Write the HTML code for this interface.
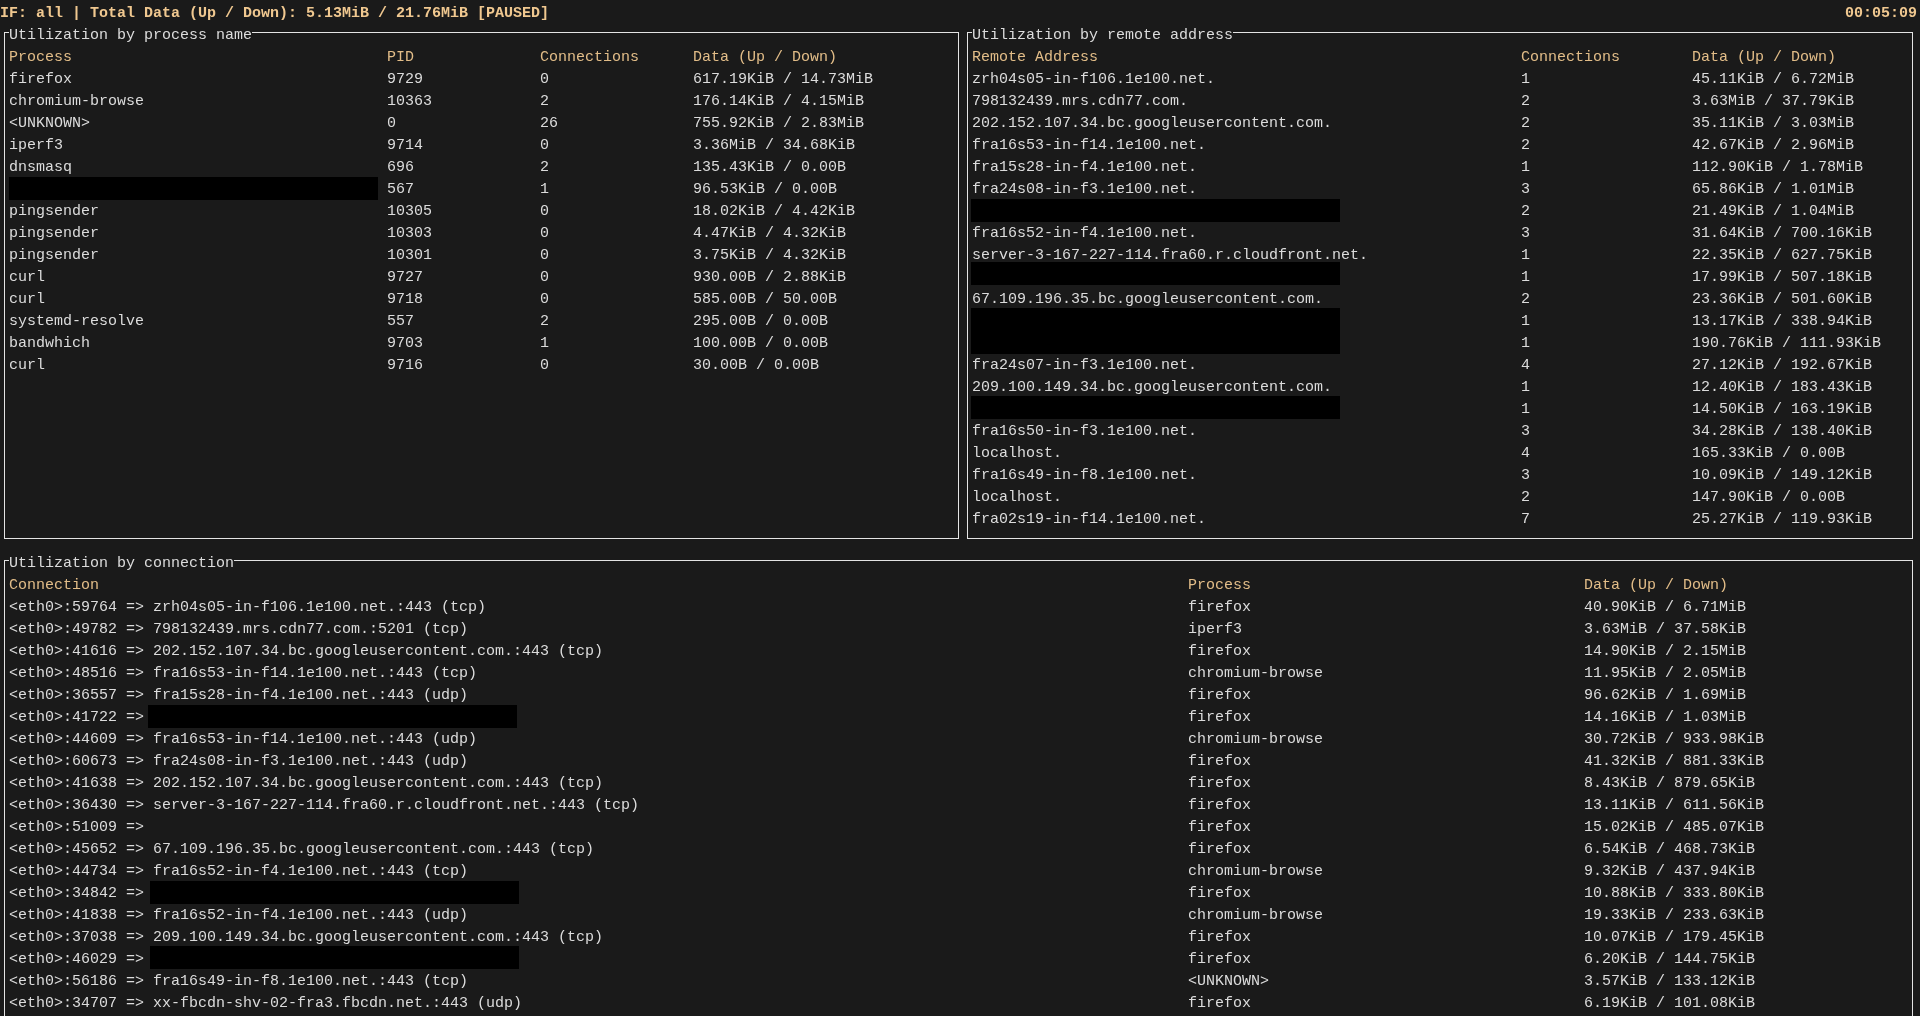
<!DOCTYPE html><html><head><meta charset="utf-8"><style>
html,body{margin:0;padding:0;width:1920px;height:1016px;overflow:hidden;background:#1a1a1a;}
body{position:relative;font-family:"Liberation Mono",monospace;font-size:15px;line-height:22px;color:#dcdcdc;}
.t,.h,.b{position:absolute;white-space:pre;height:22px;}
.h{color:#e2bd88;}
.b{color:#f0c890;font-weight:bold;}
.l{position:absolute;background:#e4e4e4;}
.k{position:absolute;background:#000;}

</style></head><body><div id="w" style="position:absolute;left:0;top:0;width:1920px;height:1016px;will-change:transform">
<div class="l" style="left:4px;top:32px;width:5px;height:1px"></div>
<div class="l" style="left:252px;top:32px;width:707px;height:1px"></div>
<div class="l" style="left:4px;top:32px;width:1px;height:507px"></div>
<div class="l" style="left:958px;top:32px;width:1px;height:507px"></div>
<div class="l" style="left:4px;top:538px;width:955px;height:1px"></div>
<div class="l" style="left:967px;top:32px;width:5px;height:1px"></div>
<div class="l" style="left:1233px;top:32px;width:680px;height:1px"></div>
<div class="l" style="left:967px;top:32px;width:1px;height:507px"></div>
<div class="l" style="left:1912px;top:32px;width:1px;height:507px"></div>
<div class="l" style="left:967px;top:538px;width:946px;height:1px"></div>
<div class="l" style="left:4px;top:560px;width:5px;height:1px"></div>
<div class="l" style="left:234px;top:560px;width:1679px;height:1px"></div>
<div class="l" style="left:4px;top:560px;width:1px;height:485px"></div>
<div class="l" style="left:1912px;top:560px;width:1px;height:485px"></div>
<div class="l" style="left:4px;top:1044px;width:1909px;height:1px"></div>
<div class="k" style="left:9px;top:177px;width:369px;height:23px"></div>
<div class="k" style="left:971px;top:199px;width:369px;height:23px"></div>
<div class="k" style="left:971px;top:262px;width:369px;height:23px"></div>
<div class="k" style="left:971px;top:308px;width:369px;height:46px"></div>
<div class="k" style="left:971px;top:396px;width:369px;height:23px"></div>
<div class="k" style="left:148px;top:705px;width:369px;height:23px"></div>
<div class="k" style="left:150px;top:881px;width:369px;height:23px"></div>
<div class="k" style="left:150px;top:946px;width:369px;height:23px"></div>
<div class="b" style="left:0px;top:3px">IF: all | Total Data (Up / Down): 5.13MiB / 21.76MiB [PAUSED]</div>
<div class="b" style="left:1845px;top:3px">00:05:09</div>
<div class="t" style="left:9px;top:25px">Utilization by process name</div>
<div class="t" style="left:972px;top:25px">Utilization by remote address</div>
<div class="h" style="left:9px;top:47px">Process</div>
<div class="h" style="left:387px;top:47px">PID</div>
<div class="h" style="left:540px;top:47px">Connections</div>
<div class="h" style="left:693px;top:47px">Data (Up / Down)</div>
<div class="h" style="left:972px;top:47px">Remote Address</div>
<div class="h" style="left:1521px;top:47px">Connections</div>
<div class="h" style="left:1692px;top:47px">Data (Up / Down)</div>
<div class="t" style="left:9px;top:69px">firefox</div>
<div class="t" style="left:387px;top:69px">9729</div>
<div class="t" style="left:540px;top:69px">0</div>
<div class="t" style="left:693px;top:69px">617.19KiB / 14.73MiB</div>
<div class="t" style="left:9px;top:91px">chromium-browse</div>
<div class="t" style="left:387px;top:91px">10363</div>
<div class="t" style="left:540px;top:91px">2</div>
<div class="t" style="left:693px;top:91px">176.14KiB / 4.15MiB</div>
<div class="t" style="left:9px;top:113px">&lt;UNKNOWN&gt;</div>
<div class="t" style="left:387px;top:113px">0</div>
<div class="t" style="left:540px;top:113px">26</div>
<div class="t" style="left:693px;top:113px">755.92KiB / 2.83MiB</div>
<div class="t" style="left:9px;top:135px">iperf3</div>
<div class="t" style="left:387px;top:135px">9714</div>
<div class="t" style="left:540px;top:135px">0</div>
<div class="t" style="left:693px;top:135px">3.36MiB / 34.68KiB</div>
<div class="t" style="left:9px;top:157px">dnsmasq</div>
<div class="t" style="left:387px;top:157px">696</div>
<div class="t" style="left:540px;top:157px">2</div>
<div class="t" style="left:693px;top:157px">135.43KiB / 0.00B</div>
<div class="t" style="left:387px;top:179px">567</div>
<div class="t" style="left:540px;top:179px">1</div>
<div class="t" style="left:693px;top:179px">96.53KiB / 0.00B</div>
<div class="t" style="left:9px;top:201px">pingsender</div>
<div class="t" style="left:387px;top:201px">10305</div>
<div class="t" style="left:540px;top:201px">0</div>
<div class="t" style="left:693px;top:201px">18.02KiB / 4.42KiB</div>
<div class="t" style="left:9px;top:223px">pingsender</div>
<div class="t" style="left:387px;top:223px">10303</div>
<div class="t" style="left:540px;top:223px">0</div>
<div class="t" style="left:693px;top:223px">4.47KiB / 4.32KiB</div>
<div class="t" style="left:9px;top:245px">pingsender</div>
<div class="t" style="left:387px;top:245px">10301</div>
<div class="t" style="left:540px;top:245px">0</div>
<div class="t" style="left:693px;top:245px">3.75KiB / 4.32KiB</div>
<div class="t" style="left:9px;top:267px">curl</div>
<div class="t" style="left:387px;top:267px">9727</div>
<div class="t" style="left:540px;top:267px">0</div>
<div class="t" style="left:693px;top:267px">930.00B / 2.88KiB</div>
<div class="t" style="left:9px;top:289px">curl</div>
<div class="t" style="left:387px;top:289px">9718</div>
<div class="t" style="left:540px;top:289px">0</div>
<div class="t" style="left:693px;top:289px">585.00B / 50.00B</div>
<div class="t" style="left:9px;top:311px">systemd-resolve</div>
<div class="t" style="left:387px;top:311px">557</div>
<div class="t" style="left:540px;top:311px">2</div>
<div class="t" style="left:693px;top:311px">295.00B / 0.00B</div>
<div class="t" style="left:9px;top:333px">bandwhich</div>
<div class="t" style="left:387px;top:333px">9703</div>
<div class="t" style="left:540px;top:333px">1</div>
<div class="t" style="left:693px;top:333px">100.00B / 0.00B</div>
<div class="t" style="left:9px;top:355px">curl</div>
<div class="t" style="left:387px;top:355px">9716</div>
<div class="t" style="left:540px;top:355px">0</div>
<div class="t" style="left:693px;top:355px">30.00B / 0.00B</div>
<div class="t" style="left:972px;top:69px">zrh04s05-in-f106.1e100.net.</div>
<div class="t" style="left:1521px;top:69px">1</div>
<div class="t" style="left:1692px;top:69px">45.11KiB / 6.72MiB</div>
<div class="t" style="left:972px;top:91px">798132439.mrs.cdn77.com.</div>
<div class="t" style="left:1521px;top:91px">2</div>
<div class="t" style="left:1692px;top:91px">3.63MiB / 37.79KiB</div>
<div class="t" style="left:972px;top:113px">202.152.107.34.bc.googleusercontent.com.</div>
<div class="t" style="left:1521px;top:113px">2</div>
<div class="t" style="left:1692px;top:113px">35.11KiB / 3.03MiB</div>
<div class="t" style="left:972px;top:135px">fra16s53-in-f14.1e100.net.</div>
<div class="t" style="left:1521px;top:135px">2</div>
<div class="t" style="left:1692px;top:135px">42.67KiB / 2.96MiB</div>
<div class="t" style="left:972px;top:157px">fra15s28-in-f4.1e100.net.</div>
<div class="t" style="left:1521px;top:157px">1</div>
<div class="t" style="left:1692px;top:157px">112.90KiB / 1.78MiB</div>
<div class="t" style="left:972px;top:179px">fra24s08-in-f3.1e100.net.</div>
<div class="t" style="left:1521px;top:179px">3</div>
<div class="t" style="left:1692px;top:179px">65.86KiB / 1.01MiB</div>
<div class="t" style="left:1521px;top:201px">2</div>
<div class="t" style="left:1692px;top:201px">21.49KiB / 1.04MiB</div>
<div class="t" style="left:972px;top:223px">fra16s52-in-f4.1e100.net.</div>
<div class="t" style="left:1521px;top:223px">3</div>
<div class="t" style="left:1692px;top:223px">31.64KiB / 700.16KiB</div>
<div class="t" style="left:972px;top:245px">server-3-167-227-114.fra60.r.cloudfront.net.</div>
<div class="t" style="left:1521px;top:245px">1</div>
<div class="t" style="left:1692px;top:245px">22.35KiB / 627.75KiB</div>
<div class="t" style="left:1521px;top:267px">1</div>
<div class="t" style="left:1692px;top:267px">17.99KiB / 507.18KiB</div>
<div class="t" style="left:972px;top:289px">67.109.196.35.bc.googleusercontent.com.</div>
<div class="t" style="left:1521px;top:289px">2</div>
<div class="t" style="left:1692px;top:289px">23.36KiB / 501.60KiB</div>
<div class="t" style="left:1521px;top:311px">1</div>
<div class="t" style="left:1692px;top:311px">13.17KiB / 338.94KiB</div>
<div class="t" style="left:1521px;top:333px">1</div>
<div class="t" style="left:1692px;top:333px">190.76KiB / 111.93KiB</div>
<div class="t" style="left:972px;top:355px">fra24s07-in-f3.1e100.net.</div>
<div class="t" style="left:1521px;top:355px">4</div>
<div class="t" style="left:1692px;top:355px">27.12KiB / 192.67KiB</div>
<div class="t" style="left:972px;top:377px">209.100.149.34.bc.googleusercontent.com.</div>
<div class="t" style="left:1521px;top:377px">1</div>
<div class="t" style="left:1692px;top:377px">12.40KiB / 183.43KiB</div>
<div class="t" style="left:1521px;top:399px">1</div>
<div class="t" style="left:1692px;top:399px">14.50KiB / 163.19KiB</div>
<div class="t" style="left:972px;top:421px">fra16s50-in-f3.1e100.net.</div>
<div class="t" style="left:1521px;top:421px">3</div>
<div class="t" style="left:1692px;top:421px">34.28KiB / 138.40KiB</div>
<div class="t" style="left:972px;top:443px">localhost.</div>
<div class="t" style="left:1521px;top:443px">4</div>
<div class="t" style="left:1692px;top:443px">165.33KiB / 0.00B</div>
<div class="t" style="left:972px;top:465px">fra16s49-in-f8.1e100.net.</div>
<div class="t" style="left:1521px;top:465px">3</div>
<div class="t" style="left:1692px;top:465px">10.09KiB / 149.12KiB</div>
<div class="t" style="left:972px;top:487px">localhost.</div>
<div class="t" style="left:1521px;top:487px">2</div>
<div class="t" style="left:1692px;top:487px">147.90KiB / 0.00B</div>
<div class="t" style="left:972px;top:509px">fra02s19-in-f14.1e100.net.</div>
<div class="t" style="left:1521px;top:509px">7</div>
<div class="t" style="left:1692px;top:509px">25.27KiB / 119.93KiB</div>
<div class="t" style="left:9px;top:553px">Utilization by connection</div>
<div class="h" style="left:9px;top:575px">Connection</div>
<div class="h" style="left:1188px;top:575px">Process</div>
<div class="h" style="left:1584px;top:575px">Data (Up / Down)</div>
<div class="t" style="left:9px;top:597px">&lt;eth0&gt;:59764 =&gt; zrh04s05-in-f106.1e100.net.:443 (tcp)</div>
<div class="t" style="left:1188px;top:597px">firefox</div>
<div class="t" style="left:1584px;top:597px">40.90KiB / 6.71MiB</div>
<div class="t" style="left:9px;top:619px">&lt;eth0&gt;:49782 =&gt; 798132439.mrs.cdn77.com.:5201 (tcp)</div>
<div class="t" style="left:1188px;top:619px">iperf3</div>
<div class="t" style="left:1584px;top:619px">3.63MiB / 37.58KiB</div>
<div class="t" style="left:9px;top:641px">&lt;eth0&gt;:41616 =&gt; 202.152.107.34.bc.googleusercontent.com.:443 (tcp)</div>
<div class="t" style="left:1188px;top:641px">firefox</div>
<div class="t" style="left:1584px;top:641px">14.90KiB / 2.15MiB</div>
<div class="t" style="left:9px;top:663px">&lt;eth0&gt;:48516 =&gt; fra16s53-in-f14.1e100.net.:443 (tcp)</div>
<div class="t" style="left:1188px;top:663px">chromium-browse</div>
<div class="t" style="left:1584px;top:663px">11.95KiB / 2.05MiB</div>
<div class="t" style="left:9px;top:685px">&lt;eth0&gt;:36557 =&gt; fra15s28-in-f4.1e100.net.:443 (udp)</div>
<div class="t" style="left:1188px;top:685px">firefox</div>
<div class="t" style="left:1584px;top:685px">96.62KiB / 1.69MiB</div>
<div class="t" style="left:9px;top:707px">&lt;eth0&gt;:41722 =&gt;</div>
<div class="t" style="left:1188px;top:707px">firefox</div>
<div class="t" style="left:1584px;top:707px">14.16KiB / 1.03MiB</div>
<div class="t" style="left:9px;top:729px">&lt;eth0&gt;:44609 =&gt; fra16s53-in-f14.1e100.net.:443 (udp)</div>
<div class="t" style="left:1188px;top:729px">chromium-browse</div>
<div class="t" style="left:1584px;top:729px">30.72KiB / 933.98KiB</div>
<div class="t" style="left:9px;top:751px">&lt;eth0&gt;:60673 =&gt; fra24s08-in-f3.1e100.net.:443 (udp)</div>
<div class="t" style="left:1188px;top:751px">firefox</div>
<div class="t" style="left:1584px;top:751px">41.32KiB / 881.33KiB</div>
<div class="t" style="left:9px;top:773px">&lt;eth0&gt;:41638 =&gt; 202.152.107.34.bc.googleusercontent.com.:443 (tcp)</div>
<div class="t" style="left:1188px;top:773px">firefox</div>
<div class="t" style="left:1584px;top:773px">8.43KiB / 879.65KiB</div>
<div class="t" style="left:9px;top:795px">&lt;eth0&gt;:36430 =&gt; server-3-167-227-114.fra60.r.cloudfront.net.:443 (tcp)</div>
<div class="t" style="left:1188px;top:795px">firefox</div>
<div class="t" style="left:1584px;top:795px">13.11KiB / 611.56KiB</div>
<div class="t" style="left:9px;top:817px">&lt;eth0&gt;:51009 =&gt;</div>
<div class="t" style="left:1188px;top:817px">firefox</div>
<div class="t" style="left:1584px;top:817px">15.02KiB / 485.07KiB</div>
<div class="t" style="left:9px;top:839px">&lt;eth0&gt;:45652 =&gt; 67.109.196.35.bc.googleusercontent.com.:443 (tcp)</div>
<div class="t" style="left:1188px;top:839px">firefox</div>
<div class="t" style="left:1584px;top:839px">6.54KiB / 468.73KiB</div>
<div class="t" style="left:9px;top:861px">&lt;eth0&gt;:44734 =&gt; fra16s52-in-f4.1e100.net.:443 (tcp)</div>
<div class="t" style="left:1188px;top:861px">chromium-browse</div>
<div class="t" style="left:1584px;top:861px">9.32KiB / 437.94KiB</div>
<div class="t" style="left:9px;top:883px">&lt;eth0&gt;:34842 =&gt;</div>
<div class="t" style="left:1188px;top:883px">firefox</div>
<div class="t" style="left:1584px;top:883px">10.88KiB / 333.80KiB</div>
<div class="t" style="left:9px;top:905px">&lt;eth0&gt;:41838 =&gt; fra16s52-in-f4.1e100.net.:443 (udp)</div>
<div class="t" style="left:1188px;top:905px">chromium-browse</div>
<div class="t" style="left:1584px;top:905px">19.33KiB / 233.63KiB</div>
<div class="t" style="left:9px;top:927px">&lt;eth0&gt;:37038 =&gt; 209.100.149.34.bc.googleusercontent.com.:443 (tcp)</div>
<div class="t" style="left:1188px;top:927px">firefox</div>
<div class="t" style="left:1584px;top:927px">10.07KiB / 179.45KiB</div>
<div class="t" style="left:9px;top:949px">&lt;eth0&gt;:46029 =&gt;</div>
<div class="t" style="left:1188px;top:949px">firefox</div>
<div class="t" style="left:1584px;top:949px">6.20KiB / 144.75KiB</div>
<div class="t" style="left:9px;top:971px">&lt;eth0&gt;:56186 =&gt; fra16s49-in-f8.1e100.net.:443 (tcp)</div>
<div class="t" style="left:1188px;top:971px">&lt;UNKNOWN&gt;</div>
<div class="t" style="left:1584px;top:971px">3.57KiB / 133.12KiB</div>
<div class="t" style="left:9px;top:993px">&lt;eth0&gt;:34707 =&gt; xx-fbcdn-shv-02-fra3.fbcdn.net.:443 (udp)</div>
<div class="t" style="left:1188px;top:993px">firefox</div>
<div class="t" style="left:1584px;top:993px">6.19KiB / 101.08KiB</div>
</div></body></html>
